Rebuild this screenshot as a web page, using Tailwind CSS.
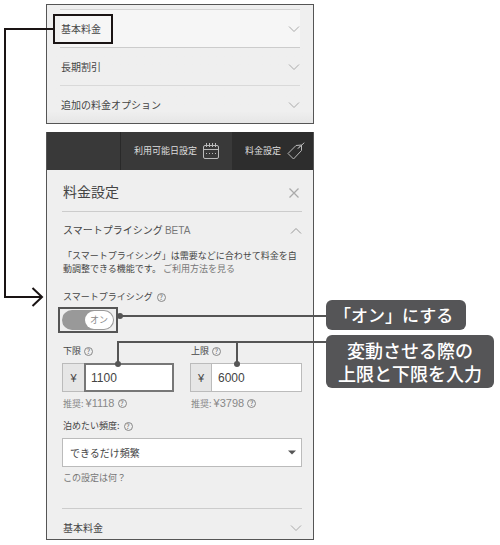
<!DOCTYPE html>
<html lang="ja">
<head>
    <meta charset="UTF-8">
    <meta name="viewport" content="width=device-width, initial-scale=1.0">
    <title>料金設定</title>
    <script src="https://cdn.jsdelivr.net/npm/@tailwindcss/browser@4"></script>
</head>
<body class="bg-white font-['Noto_Sans_CJK_JP',sans-serif] text-[#444]">
    <main class="relative pt-1 pl-[46px] pr-[186px]">

        <!-- Arrow from the menu item to the settings panel -->
        <div class="absolute left-1 top-7 w-[38px] h-[270px] border-2 border-r-0 border-[#1a1414]"></div>
        <svg class="absolute left-[31px] top-[287px]" width="13" height="20" viewBox="0 0 13 20" fill="none" stroke="#1a1414" stroke-width="2"><path d="M1.500 1L11 10L1.500 19"/></svg>

        <!-- Menu -->
        <section class="border border-[#555] bg-linear-to-b from-[#efefef] from-90% to-[#e6e6e6] pt-1 pl-[13px] pr-[13px] text-[10px]">
            <button class="relative flex w-full h-[38px] items-center justify-between border-t border-[#d4d4d4] bg-[#f6f6f6]">
                <span class="absolute -left-[18px] w-3 h-[2px] bg-[#1a1414]"></span>
                <span class="relative flex h-[30px] w-[60px] items-center -ml-[7px] pl-[6px] border-2 border-[#1a1414]">基本料金</span>
                <svg width="12" height="8" viewBox="0 0 12 8" fill="none" stroke="#aaa"><path d="M1 1.500L6 6.500L11 1.500"/></svg>
            </button>
            <button class="flex w-full h-[38px] items-center justify-between border-t border-[#ccc]">
                <span class="pl-px">長期割引</span>
                <svg width="12" height="8" viewBox="0 0 12 8" fill="none" stroke="#aaa"><path d="M1 1.500L6 6.500L11 1.500"/></svg>
            </button>
            <button class="flex w-full h-[38px] items-center justify-between border-t border-[#d9d9d9]">
                <span class="pl-px">追加の料金オプション</span>
                <svg width="12" height="8" viewBox="0 0 12 8" fill="none" stroke="#aaa"><path d="M1 1.500L6 6.500L11 1.500"/></svg>
            </button>
        </section>

        <!-- Price settings -->
        <section class="mt-2 border border-t-0 border-[#555] bg-[#efefef] text-[9px] leading-3">
            <nav class="flex h-[38px] bg-[#393939] text-[#ddd]">
                <div class="w-[74px] border-r border-[#292929]"></div>
                <a href="#" class="flex flex-1 items-center justify-end gap-[6px] pr-[13px]">
                    利用可能日設定
                    <svg width="16" height="18" viewBox="0 0 16 18" fill="none" stroke="#bbb"><rect x=".5" y="3.500" width="15" height="13" rx="1.500"/><path d="M.5 7.500H15.500M3.500 1V5M6.500 1V5M9.500 1V5M12.500 1V5"/><path d="M3 11.500H13" stroke-dasharray="1 2"/></svg>
                </a>
                <a href="#" class="flex w-[81px] items-center justify-end gap-[6px] pr-2 bg-[#2d2d2d]">
                    料金設定
                    <svg width="18" height="18" viewBox="0 0 18 18" fill="none" stroke="#bbb"><path d="M1 11.500L9 3.500L14.500 3L14.500 8.500L6.500 17Z" stroke-linejoin="round"/><path d="M11 6.500L13 4.500M12 5.500L17 1" stroke-linecap="round"/></svg>
                </a>
            </nav>

            <div class="pl-[15px] pr-[11px]">
                <header class="flex h-[42px] items-center justify-between border-b border-[#ccc] pl-px pr-[3px]">
                    <h1 class="text-[14px] leading-4">料金設定</h1>
                    <button aria-label="閉じる" class="pt-1"><svg width="10" height="10" viewBox="0 0 10 10" fill="none" stroke="#aaa" stroke-width="1.300"><path d="M.5 .5L9.500 9.500M9.500 .5L.5 9.500"/></svg></button>
                </header>

                <button class="flex w-full h-[37px] items-center justify-between pl-px text-[10px]">
                    <span>スマートプライシング <span class="font-['Liberation_Sans',sans-serif] text-[#777]">BETA</span></span>
                    <svg width="12" height="8" viewBox="0 0 12 8" fill="none" stroke="#999"><path d="M1 6.500L6 1.500L11 6.500"/></svg>
                </button>
                <p class="pl-px leading-[13px] whitespace-nowrap">「スマートプライシング」は需要などに合わせて料金を自<br>動調整できる機能です。 <a href="#" class="text-[#777]">ご利用方法を見る</a></p>

                <div class="mt-4 flex items-center gap-1 pl-px">
                    <label for="smart">スマートプライシング</label>
                    <button class="size-[9px] rounded-full border border-[#888] text-[7px] leading-[7px] text-[#666]">?</button>
                </div>
                <div class="relative mt-1 -ml-1 flex items-center">
                    <div class="flex h-[26px] w-[60px] items-center justify-center border-2 border-[#555]">
                        <label class="flex h-5 w-[52px] justify-end rounded-full bg-[#999] p-px">
                            <input id="smart" type="checkbox" checked class="sr-only">
                            <span class="flex w-7 items-center justify-center rounded-full bg-white text-[#888]">オン</span>
                        </label>
                    </div>
                    <span class="absolute left-[58px] -right-6 top-2 h-[2px] bg-[#555]"></span>
                    <span class="absolute left-[59px] top-[6px] size-[6px] rounded-full bg-[#555]"></span>
                    <p class="absolute left-full -top-[7px] ml-6 w-[140px] rounded-md bg-[#555557] pl-2 text-[17px] leading-[30px] font-medium whitespace-nowrap text-white">「オン」にする</p>
                </div>

                <div class="relative mt-3 grid grid-cols-2 gap-4">
                    <span class="absolute left-[55px] -right-6 -top-1 h-[2px] bg-[#555]"></span>
                    <p class="absolute left-full -top-[10px] ml-6 w-[168px] rounded-md bg-[#555557] pt-1 pb-[3px] text-center text-[18px] leading-[23px] font-medium whitespace-nowrap text-white">変動させる際の<br>上限と下限を入力</p>
                    <div class="relative">
                        <div class="flex items-center gap-[3px] pl-px">
                            <label for="min">下限</label>
                            <button class="size-[9px] rounded-full border border-[#888] text-[7px] leading-[7px] text-[#666]">?</button>
                        </div>
                        <div class="mt-[6px] flex h-[29px]">
                            <span class="flex w-[22px] items-center justify-center border border-r-0 border-[#bbb] bg-[#e6e6e6] font-['Liberation_Sans',sans-serif] text-[11px]">¥</span>
                            <input id="min" type="text" value="1100" class="min-w-0 flex-1 border-2 border-[#777] bg-white pl-[5px] font-['Liberation_Sans',sans-serif] text-[12px]">
                        </div>
                        <p class="mt-[5px] flex h-3 items-center gap-[3px] pl-px text-[#888]"><span>推奨: <span class="font-['Liberation_Sans',sans-serif] text-[11px]">¥1118</span></span>
                            <button class="size-[9px] rounded-full border border-[#888] text-[7px] leading-[7px] text-[#666]">?</button></p>
                        <span class="absolute left-[55px] -top-1 h-[22px] w-[2px] bg-[#555]"></span>
                        <span class="absolute left-[53px] top-4 size-[6px] rounded-full bg-[#555]"></span>
                    </div>
                    <div class="relative">
                        <div class="flex items-center gap-[3px] pl-px">
                            <label for="max">上限</label>
                            <button class="size-[9px] rounded-full border border-[#888] text-[7px] leading-[7px] text-[#666]">?</button>
                        </div>
                        <div class="mt-[6px] flex h-[29px]">
                            <span class="flex w-[22px] items-center justify-center border border-[#bbb] bg-[#e6e6e6] font-['Liberation_Sans',sans-serif] text-[11px]">¥</span>
                            <input id="max" type="text" value="6000" class="min-w-0 flex-1 border border-l-0 border-[#bbb] bg-white pl-[6px] font-['Liberation_Sans',sans-serif] text-[12px]">
                        </div>
                        <p class="mt-[5px] flex h-3 items-center gap-[3px] pl-px text-[#888]"><span>推奨: <span class="font-['Liberation_Sans',sans-serif] text-[11px]">¥3798</span></span>
                            <button class="size-[9px] rounded-full border border-[#888] text-[7px] leading-[7px] text-[#666]">?</button></p>
                        <span class="absolute left-[46px] -top-1 h-[22px] w-[2px] bg-[#555]"></span>
                        <span class="absolute left-[44px] top-4 size-[6px] rounded-full bg-[#555]"></span>
                    </div>
                </div>

                <div class="mt-[11px] flex items-center gap-1 pl-px">
                    <label for="frequency">泊めたい頻度:</label>
                    <button class="size-[9px] rounded-full border border-[#888] text-[7px] leading-[7px] text-[#666]">?</button>
                </div>
                <div class="relative mt-[6px]">
                    <select id="frequency" class="block h-[29px] w-full appearance-none border border-[#bbb] bg-white pl-[7px] text-[10px]">
                        <option>できるだけ頻繁</option>
                    </select>
                    <svg class="pointer-events-none absolute right-[6px] top-3" width="8" height="5" viewBox="0 0 8 5" fill="#555"><path d="M0 .5H8L4 4.500Z"/></svg>
                </div>
                <a href="#" class="mt-[5px] block pl-px text-[#777]">この設定は何？</a>

                <button class="mt-6 flex h-[31px] w-full items-center justify-between border-t border-[#ccc] pt-2 pl-px text-[10px]">
                    基本料金
                    <svg width="12" height="8" viewBox="0 0 12 8" fill="none" stroke="#aaa"><path d="M1 1.500L6 6.500L11 1.500"/></svg>
                </button>
            </div>
        </section>
    </main>
</body>
</html>
